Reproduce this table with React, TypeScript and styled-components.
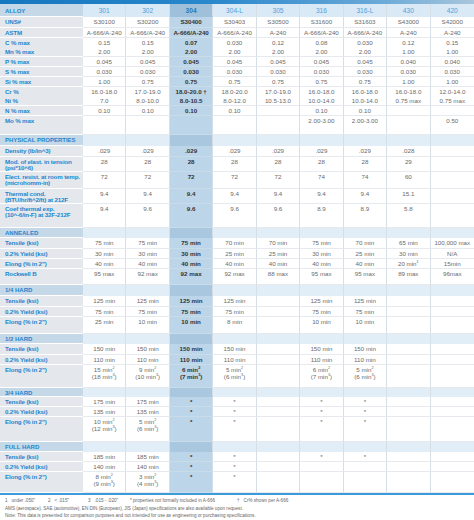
import React from 'react';
import styled, { createGlobalStyle } from 'styled-components';

const GlobalStyle = createGlobalStyle`
    * { box-sizing: border-box; }
    body {
        margin: 0;
        background: #ffffff;
        font-family: 'Liberation Sans', Arial, sans-serif;
    }
`

const HI = 2;

const Page = styled.div`
    width: 474px;
    background: #fff;
`

const TopBar = styled.div`
    height: 4px;
    background: linear-gradient(90deg, #1577bf 0%, #2a88cc 45%, #6aa9d8 80%, #a9c6dc 100%);
`

const Row = styled.div<{ $h: number }>`
    display: grid;
    grid-template-columns: 83px repeat(9, 1fr);
    height: ${p => p.$h}px;
`

const Label = styled.div<{ $kind: 'head' | 'band' | 'data' }>`
    background: ${p => (p.$kind === 'data' ? '#e4e8ec' : '#c4d8e8')};
    color: #1c86cf;
    font-weight: bold;
    font-size: ${p => (p.$kind === 'data' ? '6.2px' : '6px')};
    letter-spacing: ${p => (p.$kind === 'data' ? '-0.15px' : '0')};
    line-height: 6.4px;
    padding: ${p => (p.$kind === 'head' ? '3.5px 1px 0 5px' : '1.8px 1px 0 5px')};
    white-space: nowrap;
    border-bottom: 1px solid #ffffff;
    overflow: hidden;
`

const Cell = styled.div<{ $kind: 'head' | 'band' | 'data'; $hi: boolean }>`
    text-align: center;
    font-size: ${p => (p.$kind === 'head' ? '6.6px' : '6.2px')};
    line-height: 6.6px;
    padding-top: ${p => (p.$kind === 'head' ? '3.5px' : '2px')};
    white-space: nowrap;
    color: ${p => (p.$kind === 'head' ? (p.$hi ? '#2a78b8' : '#4aa3de') : p.$hi ? '#333' : '#6a6a6a')};
    font-weight: ${p => (p.$hi && p.$kind !== 'band' ? 'bold' : 'normal')};
    border-right: 1px solid #d7dfe6;
    border-bottom: 1px solid ${p => (p.$kind === 'data' ? (p.$hi ? '#c9dcea' : '#e6eaee') : 'transparent')};
    background: ${p => {
        if (p.$kind === 'head') return p.$hi ? '#9fc0db' : '#d9e9f5';
        if (p.$kind === 'band') return p.$hi ? '#a9c8df' : '#e1eef7';
        return p.$hi ? '#bcd5e8' : '#ffffff';
    }};
    &:last-child { border-right: none; }
`

const Sup = styled.sup`
    font-size: 3.8px;
    line-height: 0;
    vertical-align: top;
    position: relative;
    top: 1px;
`

const BottomLine = styled.div`
    height: 2px;
    background: #3e9ad8;
`

const Notes = styled.div`
    padding: 3px 5px 0 5px;
    color: #666;
    font-size: 4.6px;
    line-height: 6.4px;
    white-space: nowrap;
`

const NoteLine = styled.div`
    display: grid;
    grid-template-columns: 43px 40px 42px 107px auto;
    margin-bottom: 2px;
`

const Num = styled.span`
    margin-right: 4px;
`

type Kind = 'head' | 'band' | 'data';
type Def = { kind: Kind; label: React.ReactNode; vals?: React.ReactNode[]; h: number };

const m = (a: string, b: string) => (
    <>
        {a} min<Sup>2</Sup>
        <br />({b} min<Sup>3</Sup>)
    </>
);

const rep = (v: string, n: number) => Array.from({ length: n }, () => v);

const rows: Def[] = [
    { kind: 'head', label: 'ALLOY', h: 13, vals: ['301', '302', '304', '304-L', '305', '316', '316-L', '430', '420'] },
    { kind: 'data', label: 'UNS#', h: 11, vals: ['S30100', 'S30200', 'S30400', 'S30403', 'S30500', 'S31600', 'S31603', 'S43000', 'S42000'] },
    { kind: 'data', label: 'ASTM', h: 10, vals: ['A-666/A-240', 'A-666/A-240', 'A-666/A-240', 'A-666/A-240', 'A-240', 'A-666/A-240', 'A-666/A-240', 'A-240', 'A-240'] },
    { kind: 'data', label: 'C % max', h: 9, vals: ['0.15', '0.15', '0.07', '0.030', '0.12', '0.08', '0.030', '0.12', '0.15'] },
    { kind: 'data', label: 'Mn % max', h: 10, vals: [...rep('2.00', 7), '1.00', '1.00'] },
    { kind: 'data', label: 'P % max', h: 10, vals: [...rep('0.045', 7), '0.040', '0.040'] },
    { kind: 'data', label: 'S % max', h: 10, vals: rep('0.030', 9) },
    { kind: 'data', label: 'Si % max', h: 10, vals: ['1.00', ...rep('0.75', 6), '1.00', '1.00'] },
    { kind: 'data', label: 'Cr %', h: 9, vals: ['16.0-18.0', '17.0-19.0', '18.0-20.0 †', '18.0-20.0', '17.0-19.0', '16.0-18.0', '16.0-18.0', '16.0-18.0', '12.0-14.0'] },
    { kind: 'data', label: 'Ni %', h: 10, vals: ['7.0', '8.0-10.0', '8.0-10.5', '8.0-12.0', '10.5-13.0', '10.0-14.0', '10.0-14.0', '0.75 max', '0.75 max'] },
    { kind: 'data', label: 'N % max', h: 10, vals: ['0.10', '0.10', '0.10', '0.10', '', '0.10', '0.10', '', ''] },
    { kind: 'data', label: 'Mo % max', h: 19, vals: ['', '', '', '', '', '2.00-3.00', '2.00-3.00', '', '0.50'] },

    { kind: 'band', label: 'PHYSICAL PROPERTIES', h: 11 },
    { kind: 'data', label: 'Density (lb/in^3)', h: 11, vals: [...rep('.029', 7), '.028', ''] },
    { kind: 'data', label: <>Mod. of elast. in tension<br />(psi*10^6)</>, h: 15, vals: [...rep('28', 7), '29', ''] },
    { kind: 'data', label: <>Elect. resist. at room temp.<br />(microhomm-in)</>, h: 17, vals: ['72', '72', '72', '72', '72', '74', '74', '60', ''] },
    { kind: 'data', label: <>Thermal cond.<br />(BTU/hr/ft^2/ft) at 212F</>, h: 15, vals: [...rep('9.4', 7), '15.1', ''] },
    { kind: 'data', label: <>Coef thermal exp.<br />(10^-6/in-F) at 32F-212F</>, h: 24, vals: ['9.4', '9.6', '9.6', '9.6', '9.6', '8.9', '8.9', '5.8', ''] },

    { kind: 'band', label: 'ANNEALED', h: 10 },
    { kind: 'data', label: 'Tensile (ksi)', h: 11, vals: ['75 min', '75 min', '75 min', '70 min', '70 min', '75 min', '70 min', '65 min', '100,000 max'] },
    { kind: 'data', label: '0.2% Yield (ksi)', h: 10, vals: ['30 min', '30 min', '30 min', '25 min', '25 min', '30 min', '25 min', '30 min', 'N/A'] },
    { kind: 'data', label: 'Elong (% in 2")', h: 10, vals: [...rep('40 min', 7), <>20 min<Sup>1</Sup></>, '15min'] },
    { kind: 'data', label: 'Rockwell B', h: 16, vals: ['95 max', '92 max', '92 max', '92 max', '88 max', '95 max', '95 max', '89 max', '96max'] },

    { kind: 'band', label: '1/4 HARD', h: 11 },
    { kind: 'data', label: 'Tensile (ksi)', h: 11, vals: ['125 min', '125 min', '125 min', '125 min', '', '125 min', '125 min', '', ''] },
    { kind: 'data', label: '0.2% Yield (ksi)', h: 10, vals: ['75 min', '75 min', '75 min', '75 min', '', '75 min', '75 min', '', ''] },
    { kind: 'data', label: 'Elong (% in 2")', h: 17, vals: ['25 min', '10 min', '10 min', '8 min', '', '10 min', '10 min', '', ''] },

    { kind: 'band', label: '1/2 HARD', h: 10 },
    { kind: 'data', label: 'Tensile (ksi)', h: 11, vals: ['150 min', '150 min', '150 min', '150 min', '', '150 min', '150 min', '', ''] },
    { kind: 'data', label: '0.2% Yield (ksi)', h: 10, vals: ['110 min', '110 min', '110 min', '110 min', '', '110 min', '110 min', '', ''] },
    { kind: 'data', label: 'Elong (% in 2")', h: 23, vals: [m('15', '18'), m('9', '10'), m('6', '7'), m('5', '6'), '', m('6', '7'), m('5', '6'), '', ''] },

    { kind: 'band', label: '3/4 HARD', h: 9 },
    { kind: 'data', label: 'Tensile (ksi)', h: 10, vals: ['175 min', '175 min', '*', '*', '', '*', '*', '', ''] },
    { kind: 'data', label: '0.2% Yield (ksi)', h: 10, vals: ['135 min', '135 min', '*', '*', '', '*', '*', '', ''] },
    { kind: 'data', label: 'Elong (% in 2")', h: 25, vals: [m('10', '12'), m('5', '6'), '*', '*', '', '*', '*', '', ''] },

    { kind: 'band', label: 'FULL HARD', h: 10 },
    { kind: 'data', label: 'Tensile (ksi)', h: 10, vals: ['185 min', '185 min', '*', '*', '', '*', '*', '', ''] },
    { kind: 'data', label: '0.2% Yield (ksi)', h: 10, vals: ['140 min', '140 min', '*', '*', '', '', '', '', ''] },
    { kind: 'data', label: 'Elong (% in 2")', h: 21, vals: [m('8', '9'), m('3', '4'), '*', '*', '', '', '', '', ''] },
];

export default function App() {
    return (
        <Page>
            <GlobalStyle />
            <TopBar />
            {rows.map((r, i) => (
                <Row key={i} $h={r.h}>
                    <Label $kind={r.kind}>{r.label}</Label>
                    {Array.from({ length: 9 }, (_, c) => (
                        <Cell key={c} $kind={r.kind} $hi={c === HI}>
                            {r.vals ? r.vals[c] : ''}
                        </Cell>
                    ))}
                </Row>
            ))}
            <BottomLine />
            <Notes>
                <NoteLine>
                    <span><Num>1</Num>under .050"</span>
                    <span><Num>2</Num>&lt; .015"</span>
                    <span><Num>3</Num>.015 - .020"</span>
                    <span>* properties not formally included in A-666</span>
                    <span><Num>†</Num>Cr% shown per A-666</span>
                </NoteLine>
                <div>AMS (aerospace), SAE (automotive), EN DIN (European), JIS (Japan) specifications are also available upon request.</div>
                <div>Note: This data is presented for comparison purposes and not intended for use as engineering or purchasing specifications.</div>
            </Notes>
        </Page>
    );
}
